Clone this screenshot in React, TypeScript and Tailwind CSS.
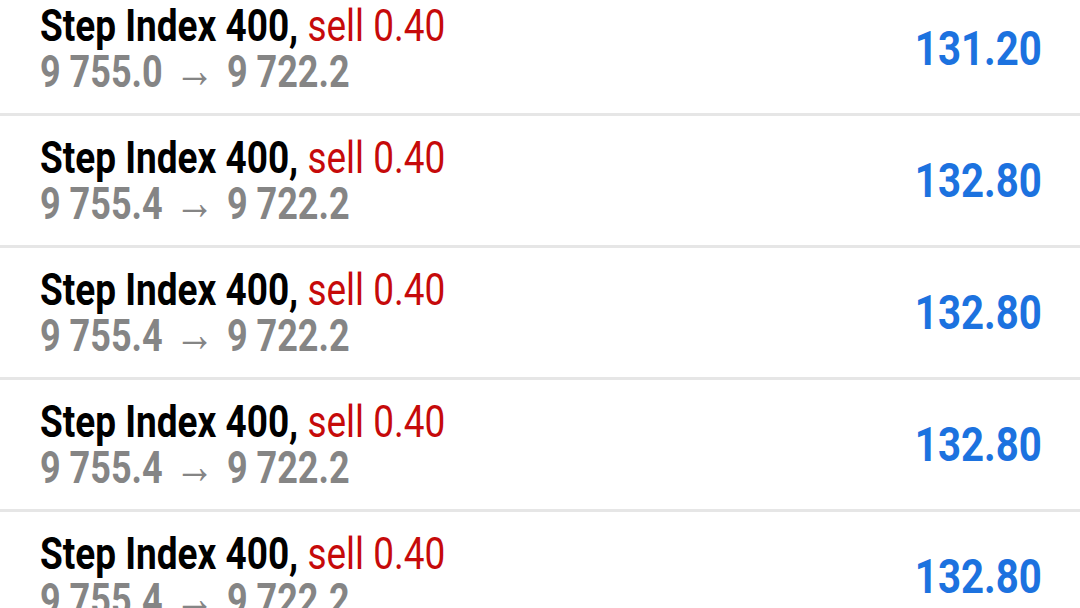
const rows = [
  { open: "9 755.0", close: "9 722.2", profit: "131.20" },
  { open: "9 755.4", close: "9 722.2", profit: "132.80" },
  { open: "9 755.4", close: "9 722.2", profit: "132.80" },
  { open: "9 755.4", close: "9 722.2", profit: "132.80" },
  { open: "9 755.4", close: "9 722.2", profit: "132.80" },
];

const TradeRow = ({ open, close, profit }: { open: string; close: string; profit: string }) => (
  <div className="flex h-[132px] shrink-0 justify-between border-b-[3px] border-[#e6e6e6] pl-10 pr-[38px]">
    <div className="pt-5 whitespace-nowrap">
      <div className="origin-left scale-x-[0.84] text-[44px] leading-[44px] font-bold text-black">
        Step Index 400, <span className="font-normal text-[#c60a0a]">sell 0.40</span>
      </div>
      <div className="origin-left scale-x-[0.8] text-[45px] leading-[45px] font-bold text-[#858585]">
        {open} <span className="mx-[4px] text-[50px] leading-[45px] font-normal">→</span> {close}
      </div>
    </div>
    <div className="self-center origin-right scale-x-[0.82] text-[49px] leading-none font-bold text-[#1c72df]">
      {profit}
    </div>
  </div>
);

export default function App() {
  return (
    <div className="h-[608px] w-[1080px] overflow-hidden bg-white font-['Roboto',sans-serif]">
      <div className="-mt-4 flex flex-col">
        {rows.map((r, i) => (
          <TradeRow key={i} {...r} />
        ))}
      </div>
    </div>
  );
}
